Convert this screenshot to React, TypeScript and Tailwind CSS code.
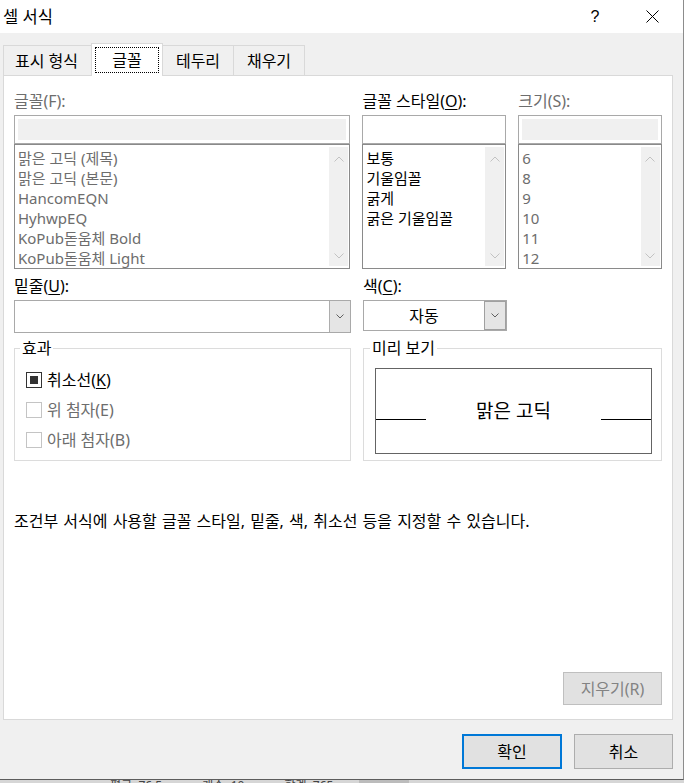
import React from "react";

function ChevUp({ color = "#c2c2c2" }: { color?: string }) {
  return (
    <svg width="10" height="6" viewBox="0 0 10 6">
      <path d="M0.5 5.5 L5 1 L9.5 5.5" stroke={color} strokeWidth="1" fill="none" />
    </svg>
  );
}
function ChevDown({ color = "#c2c2c2", w = 10, h = 6 }: { color?: string; w?: number; h?: number }) {
  return (
    <svg width={w} height={h} viewBox={`0 0 ${w} ${h}`}>
      <path d={`M0.5 0.5 L${w / 2} ${h - 1} L${w - 0.5} 0.5`} stroke={color} strokeWidth="1" fill="none" />
    </svg>
  );
}

function ListBox({ items, disabled }: { items: string[]; disabled?: boolean }) {
  return (
    <div className="flex h-[125px] border border-[#8a8a8a] bg-white">
      <div className={`flex-1 overflow-hidden pt-[3px] pl-[3px] text-[15px] ${disabled ? "text-[#6d6d6d]" : "text-black"}`}>
        {items.map((t) => (
          <div key={t} className="h-[20px] leading-[20px] whitespace-nowrap">
            {t}
          </div>
        ))}
      </div>
      <div className="my-[2px] mr-[1px] flex w-[19px] flex-col items-center justify-between bg-[#f0f0f0] pt-[9px] pb-[7px]">
        <ChevUp />
        <ChevDown />
      </div>
    </div>
  );
}

function TextBox({ disabled }: { disabled?: boolean }) {
  return (
    <div className="h-[29px] border border-[#a9a9a9] bg-white p-[3px]">
      <div className={`h-full w-full ${disabled ? "bg-[#f0f0f0]" : "bg-white"}`} />
    </div>
  );
}

function Check({ state }: { state: "on" | "off" }) {
  if (state === "on")
    return (
      <div className="flex h-[16px] w-[16px] items-center justify-center border-[1.5px] border-[#333333] bg-white">
        <div className="h-[8px] w-[8px] bg-[#333333]" />
      </div>
    );
  return <div className="h-[16px] w-[16px] border border-[#c4c4c4] bg-white" />;
}

export default function App() {
  return (
    <div className="flex h-[783px] w-[684px] flex-col overflow-hidden bg-[#c9c9c9] font-['Noto_Sans','Noto_Sans_CJK_KR',sans-serif] text-[16px] text-black">
      <div className="flex h-[780px] w-[684px] flex-none flex-col border-r border-b border-r-[#8c8c8c] border-b-[#5c5c5c] bg-[#f0f0f0]">
        {/* title bar */}
        <div className="flex h-[33px] flex-none items-center bg-white">
          <div className="pl-[3px] leading-[20px] text-[16.5px]">셀 서식</div>
          <div className="flex-1" />
          <div className="mr-[45px] w-[12px] text-center font-['Liberation_Sans',sans-serif] text-[16px] leading-[20px]">?</div>
          <svg width="13" height="13" viewBox="0 0 13 13" className="mr-[24px]">
            <path d="M0.5 0.5 L12.5 12.5 M12.5 0.5 L0.5 12.5" stroke="#000" strokeWidth="1" />
          </svg>
        </div>

        {/* body */}
        <div className="flex flex-1 flex-col pt-[10px] pl-[3px]">
          {/* tabs */}
          <div className="flex h-[32px] items-end">
            <div className="flex h-[30px] w-[88px] items-center justify-center border-t border-l border-[#d9d9d9] bg-[#f0f0f0] pr-[2px]">
              표시 형식
            </div>
            <div className="relative z-10 -mb-px flex h-[33px] w-[72px] items-center justify-center border-t border-l border-r border-[#d9d9d9] bg-white px-[3px] pt-[3px] pb-[3px]">
              <div className="flex h-full w-full items-center justify-center border border-dotted border-black">글꼴</div>
            </div>
            <div className="flex h-[30px] w-[71px] items-center justify-center border-t border-r border-[#d9d9d9] bg-[#f0f0f0]">
              테두리
            </div>
            <div className="flex h-[30px] w-[71px] items-center justify-center border-t border-r border-[#d9d9d9] bg-[#f0f0f0]">
              채우기
            </div>
          </div>

          {/* panel */}
          <div className="flex h-[645px] w-[670px] flex-col border border-[#d9d9d9] bg-white px-[10px] pt-[15px] pb-[14px]">
            {/* row 1 */}
            <div className="flex gap-[12px]">
              <div className="w-[337px]">
                <div className="mb-[4px] h-[20px] leading-[20px] text-[#6d6d6d]">글꼴(F):</div>
                <TextBox disabled />
                <ListBox
                  disabled
                  items={["맑은 고딕 (제목)", "맑은 고딕 (본문)", "HancomEQN", "HyhwpEQ", "KoPub돋움체 Bold", "KoPub돋움체 Light"]}
                />
              </div>
              <div className="w-[144px]">
                <div className="mb-[4px] h-[20px] leading-[20px] whitespace-nowrap">
                  글꼴 스타일(<span className="underline underline-offset-2">O</span>):
                </div>
                <TextBox />
                <ListBox items={["보통", "기울임꼴", "굵게", "굵은 기울임꼴"]} />
              </div>
              <div className="w-[144px]">
                <div className="mb-[4px] h-[20px] leading-[20px] text-[#6d6d6d]">크기(S):</div>
                <TextBox disabled />
                <ListBox disabled items={["6", "8", "9", "10", "11", "12"]} />
              </div>
            </div>

            {/* row 2 */}
            <div className="mt-[7px] flex gap-[12px]">
              <div className="w-[337px]">
                <div className="mb-[4px] h-[20px] leading-[20px]">
                  밑줄(<span className="underline underline-offset-2">U</span>):
                </div>
                <div className="flex h-[33px] border border-[#a9a9a9] bg-white">
                  <div className="flex-1" />
                  <div className="flex w-[21px] items-center justify-center border-l border-[#adadad] bg-[#e5e5e5]">
                    <ChevDown color="#606060" w={8} h={5} />
                  </div>
                </div>
              </div>
              <div className="w-[144px]">
                <div className="mb-[4px] h-[20px] leading-[20px]">
                  색(<span className="underline underline-offset-2">C</span>):
                </div>
                <div className="mt-[1px] flex h-[31px] border border-[#a9a9a9] bg-white">
                  <div className="flex flex-1 items-center justify-center leading-[20px]">자동</div>
                  <div className="flex w-[22px] items-center justify-center border border-[#a0a0a0] bg-[#e5e5e5]">
                    <ChevDown color="#606060" w={8} h={5} />
                  </div>
                </div>
              </div>
            </div>

            {/* row 3 group boxes */}
            <div className="mt-[15px] flex gap-[12px]">
              <div className="relative h-[113px] w-[337px] border border-[#dcdcdc] pt-[16px] pl-[11px]">
                <span className="absolute -top-[11px] left-[5px] bg-white px-[2px] leading-[20px]">효과</span>
                <div className="flex h-[30px] items-center gap-[5px]">
                  <Check state="on" />
                  <span className="leading-[20px]">
                    취소선(<span className="underline underline-offset-2">K</span>)
                  </span>
                </div>
                <div className="flex h-[30px] items-center gap-[5px] text-[#6d6d6d]">
                  <Check state="off" />
                  <span className="leading-[20px]">위 첨자(E)</span>
                </div>
                <div className="flex h-[30px] items-center gap-[5px] text-[#6d6d6d]">
                  <Check state="off" />
                  <span className="leading-[20px]">아래 첨자(B)</span>
                </div>
              </div>
              <div className="relative h-[113px] w-[299px] border border-[#dcdcdc] pt-[19px] pl-[11px]">
                <span className="absolute -top-[11px] left-[6px] bg-white px-[2px] leading-[20px]">미리 보기</span>
                <div className="flex h-[86px] w-[277px] items-center border border-[#646464]">
                  <div className="mt-[17px] h-px w-[50px] bg-black" />
                  <div className="flex-1 text-center text-[19px] leading-[24px]">맑은 고딕</div>
                  <div className="mt-[17px] h-px w-[50px] bg-black" />
                </div>
              </div>
            </div>

            {/* description */}
            <div className="mt-[50px] h-[20px] leading-[20px] whitespace-nowrap [word-spacing:1px]">
              조건부 서식에 사용할 글꼴 스타일, 밑줄, 색, 취소선 등을 지정할 수 있습니다.
            </div>

            <div className="flex-1" />
            <div className="flex justify-end">
              <div className="flex h-[33px] w-[99px] items-center justify-center border border-[#bfbfbf] bg-[#e1e1e1] text-[#838383]">
                지우기(R)
              </div>
            </div>
          </div>

          {/* dialog buttons */}
          <div className="mt-[14px] flex justify-end gap-[12px] pr-[10px]">
            <div className="flex h-[35px] w-[100px] items-center justify-center border-2 border-[#0078d7] bg-[#e1e1e1]">확인</div>
            <div className="flex h-[35px] w-[99px] items-center justify-center border border-[#adadad] bg-[#e1e1e1]">취소</div>
          </div>
        </div>
      </div>
      {/* excel status bar behind (clipped) */}
      <div className="flex h-[3px] flex-none items-start overflow-hidden bg-[#d6d6d6] text-[12px] leading-[14px] text-[#444]">
        <span className="ml-[110px] -mt-[1px]">평균: 76.5</span>
        <span className="ml-[40px] -mt-[1px]">개수: 10</span>
        <span className="ml-[40px] -mt-[1px]">합계: 765</span>
        <span className="ml-[26px] h-[3px] w-[50px] bg-[#bcbcbc]" />
      </div>
    </div>
  );
}
